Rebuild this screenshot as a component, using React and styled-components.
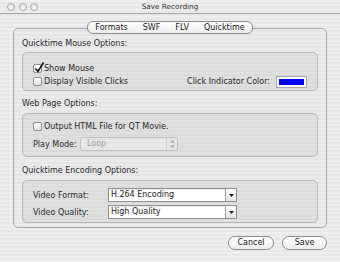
import React from 'react';
import styled, { createGlobalStyle } from 'styled-components';

const GlobalStyle = createGlobalStyle`
  html, body { margin: 0; padding: 0; }
  body {
    width: 340px;
    height: 262px;
    overflow: hidden;
    font-family: "DejaVu Sans", "Liberation Sans", sans-serif;
    font-size: 8px;
    color: #2a2a2a;
    background: repeating-linear-gradient(to bottom, #eeeeee 0, #eeeeee 2px, #e8e8e8 2px, #e8e8e8 4px);
  }
`;

const Window = styled.div`
  display: flex;
  flex-direction: column;
  width: 340px;
  height: 262px;
`;

const TitleBar = styled.div`
  display: grid;
  grid-template-columns: 1fr auto 1fr;
  align-items: center;
  height: 13px;
  border-bottom: 1px solid #a6a6a6;
`;

const Lights = styled.div`
  display: flex;
  gap: 3.5px;
  padding-left: 7px;
`;

const Light = styled.span`
  width: 8px;
  height: 8px;
  box-sizing: border-box;
  border-radius: 50%;
  border: 1px solid #ababab;
  background: radial-gradient(circle at 50% 70%, #fafafa, #d8d8d8);
`;

const Title = styled.div`
  font-size: 7.3px;
  color: #333;
  line-height: 13px;
`;

const Body = styled.div`
  display: flex;
  flex-direction: column;
  padding: 14px 13px 0 13px;
`;

const TabPanel = styled.div`
  display: flex;
  flex-direction: column;
  border: 1px solid #a8a8a8;
  border-radius: 5px;
  padding: 0 8px 4px 8px;
  background: rgba(0, 0, 0, 0.012);
`;

const TabStrip = styled.div`
  align-self: center;
  display: flex;
  height: 13px;
  box-sizing: border-box;
  margin-top: -8px;
  border: 1px solid #8c8c8c;
  border-radius: 6px;
  background: linear-gradient(#fefefe, #ededed);
  overflow: hidden;
`;

const Tab = styled.span`
  padding: 0 7.5px;
  line-height: 11px;
  color: #222;
`;

const SectionLabel = styled.div`
  line-height: 12px;
  margin: ${p => p.$top}px 0 ${p => p.$bottom}px 0;
`;

const Group = styled.div`
  display: flex;
  flex-direction: column;
  gap: ${p => p.$gap || 0}px;
  border: 1px solid #b6b6b6;
  border-radius: 5px;
  background: rgba(0, 0, 0, 0.045);
  padding: ${p => p.$pad};
`;

const Row = styled.div`
  display: flex;
  align-items: center;
  height: ${p => p.$h || 13}px;
`;

const Spacer = styled.div`
  flex: 1;
`;

const Box = styled.span`
  position: relative;
  width: 9px;
  height: 9px;
  box-sizing: border-box;
  border: 1px solid #8e8e8e;
  border-radius: 2px;
  background: linear-gradient(#ffffff, #e2e2e2);
  margin-right: 2px;
`;

const Tick = styled.svg`
  position: absolute;
  left: 0;
  top: -3px;
`;

const Swatch = styled.span`
  width: 31px;
  height: 12px;
  box-sizing: border-box;
  margin-left: 6px;
  border: 1px solid #a8a8a8;
  background: #0000f2;
  box-shadow: inset 0 0 0 2px #ffffff;
`;

const FieldLabel = styled.span`
  width: ${p => p.$w}px;
  flex: none;
`;

const Popup = styled.div`
  display: flex;
  width: ${p => p.$w}px;
  height: 14px;
  box-sizing: border-box;
  border: 1px solid #909090;
  background: #ffffff;
  box-shadow: inset 0 1px 1px rgba(0, 0, 0, 0.1);
`;

const PopupText = styled.span`
  flex: 1;
  padding-left: 2px;
  line-height: 12px;
  color: #1a1a1a;
`;

const ArrowButton = styled.span`
  display: flex;
  align-items: center;
  justify-content: center;
  width: 10px;
  border-left: 1px solid #a0a0a0;
  border-radius: 0 2px 2px 0;
  background: linear-gradient(#ffffff, #e2e2e2);
`;

const DisabledPopup = styled.div`
  display: flex;
  width: ${p => p.$w}px;
  height: 14px;
  box-sizing: border-box;
  border: 1px solid #bebebe;
  border-radius: 3px;
  background: rgba(255, 255, 255, 0.25);
`;

const DisabledText = styled.span`
  flex: 1;
  padding-left: 6px;
  line-height: 12px;
  color: #a0a0a0;
`;

const Stepper = styled.span`
  display: flex;
  align-items: center;
  justify-content: center;
  width: 10px;
  border-left: 1px solid #d0d0d0;
`;

const ButtonRow = styled.div`
  display: flex;
  justify-content: flex-end;
  gap: 8px;
  margin-top: 8px;
`;

const Button = styled.button`
  width: ${p => p.$w}px;
  height: 14px;
  padding: 0;
  font-family: inherit;
  font-size: 8px;
  line-height: 12px;
  color: #222;
  border: 1px solid #8c8c8c;
  border-radius: 7px;
  background: linear-gradient(#ffffff, #ececec);
`;

function Checkbox({ checked }) {
  return (
    <Box>
      {checked && (
        <Tick width="11" height="11" viewBox="0 0 11 11">
          <path d="M1.5 6.5 L4 9.5 L9.5 0.5" fill="none" stroke="#111" strokeWidth="1.6" />
        </Tick>
      )}
    </Box>
  );
}

function DownArrow() {
  return (
    <svg width="5" height="3" viewBox="0 0 5 3">
      <polygon points="0,0 5,0 2.5,3" fill="#222" />
    </svg>
  );
}

function UpDown() {
  return (
    <svg width="5" height="8" viewBox="0 0 5 8">
      <polygon points="2.5,0 5,2.5 0,2.5" fill="#a4a4a4" />
      <polygon points="0,5.5 5,5.5 2.5,8" fill="#a4a4a4" />
    </svg>
  );
}

export default function App() {
  return (
    <Window>
      <GlobalStyle />
      <TitleBar>
        <Lights>
          <Light />
          <Light />
          <Light />
        </Lights>
        <Title>Save Recording</Title>
        <div />
      </TitleBar>

      <Body>
        <TabPanel>
          <TabStrip>
            <Tab>Formats</Tab>
            <Tab>SWF</Tab>
            <Tab>FLV</Tab>
            <Tab>Quicktime</Tab>
          </TabStrip>

          <SectionLabel $top={4} $bottom={2}>Quicktime Mouse Options:</SectionLabel>
          <Group $pad="9px 10px 2px 10px">
            <Row>
              <Checkbox checked />
              <span>Show Mouse</span>
            </Row>
            <Row>
              <Checkbox />
              <span>Display Visible Clicks</span>
              <Spacer />
              <span>Click Indicator Color:</span>
              <Swatch />
            </Row>
          </Group>

          <SectionLabel $top={7} $bottom={3}>Web Page Options:</SectionLabel>
          <Group $pad="6px 10px 5px 10px" $gap={5}>
            <Row $h={12}>
              <Checkbox />
              <span>Output HTML File for QT Movie.</span>
            </Row>
            <Row $h={14}>
              <FieldLabel $w={47}>Play Mode:</FieldLabel>
              <DisabledPopup $w={98}>
                <DisabledText>Loop</DisabledText>
                <Stepper>
                  <UpDown />
                </Stepper>
              </DisabledPopup>
            </Row>
          </Group>

          <SectionLabel $top={8} $bottom={3}>Quicktime Encoding Options:</SectionLabel>
          <Group $pad="7px 10px 3px 10px" $gap={3}>
            <Row $h={14}>
              <FieldLabel $w={75}>Video Format:</FieldLabel>
              <Popup $w={129}>
                <PopupText>H.264 Encoding</PopupText>
                <ArrowButton>
                  <DownArrow />
                </ArrowButton>
              </Popup>
            </Row>
            <Row $h={14}>
              <FieldLabel $w={75}>Video Quality:</FieldLabel>
              <Popup $w={129}>
                <PopupText>High Quality</PopupText>
                <ArrowButton>
                  <DownArrow />
                </ArrowButton>
              </Popup>
            </Row>
          </Group>
        </TabPanel>

        <ButtonRow>
          <Button $w={46}>Cancel</Button>
          <Button $w={45}>Save</Button>
        </ButtonRow>
      </Body>
    </Window>
  );
}
